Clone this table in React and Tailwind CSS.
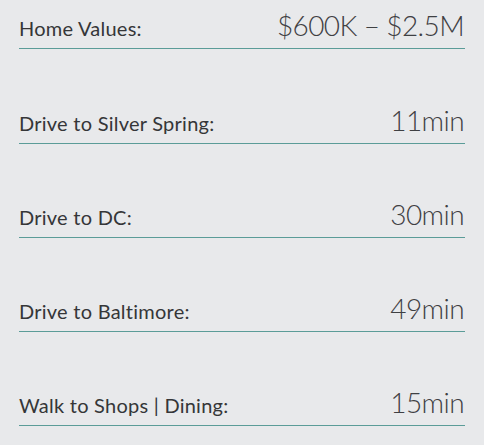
import React from 'react';

const rows = [
  { label: 'Home Values:', value: '$600K – $2.5M' },
  { label: 'Drive to Silver Spring:', value: '11min' },
  { label: 'Drive to DC:', value: '30min' },
  { label: 'Drive to Baltimore:', value: '49min' },
  { label: 'Walk to Shops | Dining:', value: '15min' },
];

export default function App() {
  return (
    <div className="w-[484px] h-[445px] bg-[#e8e9eb] px-[19px] font-['Lato',sans-serif]">
      <div className="flex flex-col gap-[45px]">
        {rows.map((row) => (
          <div
            key={row.label}
            className="h-[49px] flex items-baseline justify-between border-b border-[#5b9c98] pt-[11px] first:mb-[1px]"
          >
            <span className="text-[20px] font-normal text-[#353638] leading-none tracking-[0.25px]">
              {row.label}
            </span>
            <span className="text-[28px] font-light text-[#3f4043] leading-none pr-[1px] tracking-[-0.6px]">
              {row.value}
            </span>
          </div>
        ))}
      </div>
    </div>
  );
}
